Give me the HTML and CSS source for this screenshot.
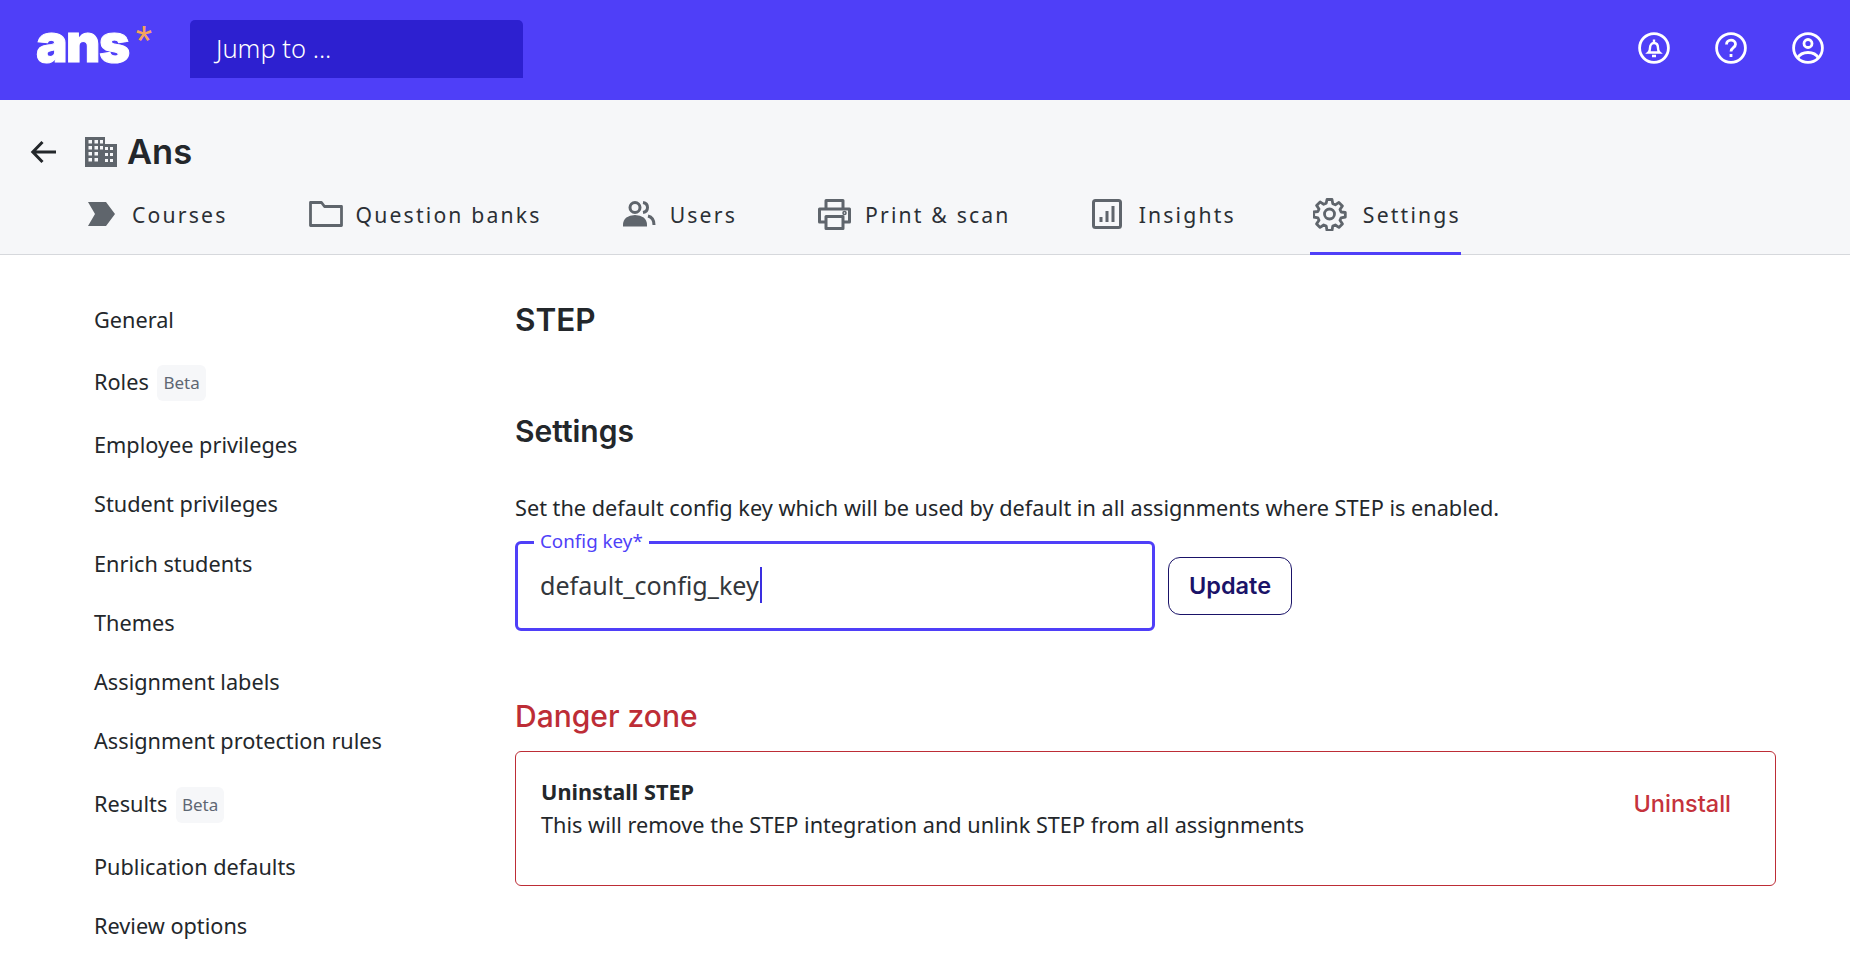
FILE: index.html
```html
<!DOCTYPE html>
<html lang="en">
<head>
<meta charset="utf-8">
<title>STEP settings</title>
<link rel="stylesheet" href="styles.css">
</head>
<body>
<header class="topbar">
  <div class="brand"><span class="brand-word">ans</span><span class="brand-star">*</span></div>
  <div class="jump">Jump to ...</div>
  <div class="top-icons">
    <svg class="top-icon" viewBox="0 0 32 32" fill="none" stroke="#fff" stroke-width="2.800"><circle cx="16" cy="16" r="14.400"/><path d="M10.500 20.500c1.200-1 1.500-2.300 1.500-4.500 0-3 1.600-5 4-5s4 2 4 5c0 2.200.3 3.500 1.500 4.500z" stroke-width="2.400"/><path d="M16 7.500v3M14 24h4" stroke-width="2.400"/></svg>
    <svg class="top-icon" viewBox="0 0 32 32" fill="none" stroke="#fff" stroke-width="2.800"><circle cx="16" cy="16" r="14.400"/><path d="M11.500 12.500c0-2.700 2-4.300 4.500-4.300s4.500 1.600 4.500 4c0 3.600-4.500 3.300-4.500 7.300"/><path d="M16 22v3"/></svg>
    <svg class="top-icon" viewBox="0 0 32 32" fill="none" stroke="#fff" stroke-width="2.800"><circle cx="16" cy="16" r="14.400"/><circle cx="16" cy="11.500" r="4"/><path d="M5.500 26c2-3.500 6-5.500 10.500-5.500s8.500 2 10.500 5.500"/></svg>
  </div>
</header>

<section class="subhead">
  <div class="title-row">
    <svg class="back" viewBox="0 0 26 26" fill="none" stroke="#23272b" stroke-width="3"><path d="M26 13H3M12.500 3 2.800 13l9.700 10"/></svg>
    <svg class="org" viewBox="0 0 32 30" fill="#5f656c"><path fill-rule="evenodd" d="M0 0h20v7h12v23H0zM3.500 3v3.500H7V3zm6 0v3.500H13V3zm5.500 0v3.500h3V3zM3.500 9v3.500H7V9zm6 0v3.500H13V9zm5.500 0v3.500h3V9zM3.500 15v3.500H7V15zm6 0v3.500H13V15zm10.500-5v3h3v-3zm5 0v3h3v-3zM3.500 21v3.500H7V21zm6 0v3.500H13V21zm10.500-5v3h3v-3zm5 0v3h3v-3zm-5 6v3h3v-3zm5 0v3h3v-3z"/></svg>
    <h1 class="org-name">Ans</h1>
  </div>
  <nav class="tabs">
    <a class="tab tab-courses">
      <svg class="tab-icon" viewBox="0 0 34 34" fill="#5f656c"><path d="M0 5h18l9 12-9 12H0l7-12z"/></svg>
      <span>Courses</span>
    </a>
    <a class="tab">
      <svg class="tab-icon" viewBox="0 0 34 34" fill="none" stroke="#5f656c" stroke-width="2.800" stroke-linejoin="round"><path d="M1.500 5.500h11l3 4h17v19H1.500z"/></svg>
      <span>Question banks</span>
    </a>
    <a class="tab">
      <svg class="tab-icon" viewBox="0 0 34 34" fill="none" stroke="#5f656c" stroke-width="3"><circle cx="12" cy="10.500" r="5"/><path d="M1.500 28c0-5.500 4-8.500 10.500-8.500s10.500 3 10.500 8.500z" fill="#5f656c"/><path d="M20 5.500c3 .5 4.500 2.500 4.500 5s-1.500 4.500-4.500 5M25 19c4 1 6 4.500 6 9"/></svg>
      <span>Users</span>
    </a>
    <a class="tab">
      <svg class="tab-icon" viewBox="0 0 34 34" fill="none" stroke="#5f656c" stroke-width="3" stroke-linejoin="round"><path d="M8 12V3.500h17V12M8 25H1.500V12h30v13H25"/><path d="M8 19.500h17v12H8z"/><circle cx="26.500" cy="16" r=".8"/></svg>
      <span>Print &amp; scan</span>
    </a>
    <a class="tab">
      <svg class="tab-icon" viewBox="0 0 34 34" fill="none" stroke="#5f656c" stroke-width="3"><rect x="1.500" y="3.500" width="27" height="27" rx="2"/><path d="M9 25v-5M15 25V14M21 25V9"/></svg>
      <span>Insights</span>
    </a>
    <a class="tab active">
      <svg class="tab-icon" viewBox="0 0 34 34" fill="none" stroke="#5f656c" stroke-width="2.800" stroke-linejoin="round"><circle cx="16.500" cy="17" r="5"/><path d="M14 2h5l.8 4.200 2.500 1.100 3.600-2.400 3.500 3.500-2.400 3.600 1.100 2.500 4.200.5v4.500l-4.200.8-1.100 2.500 2.400 3.600-3.500 3.500-3.600-2.400-2.500 1.100-.8 4.300h-5l-.8-4.300-2.500-1.100-3.600 2.400-3.500-3.500 2.400-3.600-1.100-2.500-4.200-.8V14.500l4.200-.5 1.100-2.500-2.400-3.600 3.500-3.500 3.600 2.400 2.500-1.100z" transform="translate(0 .5)"/></svg>
      <span>Settings</span>
    </a>
  </nav>
</section>

<div class="page">
  <aside class="side">
    <a class="side-item">General</a>
    <a class="side-item side-item-badge">Roles <span class="badge">Beta</span></a>
    <a class="side-item">Employee privileges</a>
    <a class="side-item">Student privileges</a>
    <a class="side-item">Enrich students</a>
    <a class="side-item">Themes</a>
    <a class="side-item">Assignment labels</a>
    <a class="side-item">Assignment protection rules</a>
    <a class="side-item side-item-badge">Results <span class="badge">Beta</span></a>
    <a class="side-item">Publication defaults</a>
    <a class="side-item">Review options</a>
  </aside>
  <main class="content">
    <h2 class="h-step">STEP</h2>
    <h3 class="h-settings">Settings</h3>
    <p class="lead">Set the default config key which will be used by default in all assignments where STEP is enabled.</p>
    <div class="form-row">
      <div class="field">
        <span class="field-label">Config key*</span>
        <span class="field-value">default_config_key</span><span class="caret"></span>
      </div>
      <button class="update">Update</button>
    </div>
    <h3 class="h-danger">Danger zone</h3>
    <div class="danger">
      <div class="danger-text">
        <strong>Uninstall STEP</strong>
        <span>This will remove the STEP integration and unlink STEP from all assignments</span>
      </div>
      <a class="uninstall">Uninstall</a>
    </div>
  </main>
</div>
</body>
</html>
```
FILE: styles.css
```css
* { box-sizing: border-box; }
html, body { margin: 0; height: 100%; overflow: hidden; }
body { font-family: "Noto Sans", "Open Sans", sans-serif; color: #23272b; background: #fff; }

.topbar { height: 100px; background: #4f3ff8; display: flex; align-items: flex-start; padding: 20px 0 0 36px; }
.brand { width: 154px; height: 50px; display: flex; color: #fff; }
.brand-word { font: 900 53px/46px "Inter", sans-serif; letter-spacing: -1.500px; -webkit-text-stroke: 1px #fff; }
.brand-star { font: 400 42px/42px "Liberation Sans", sans-serif; color: #f5a45d; margin: 0 0 0 7px; }
.jump { width: 333px; height: 58px; background: #2d20d0; color: #fff; font-size: 25.500px; line-height: 56px; padding-left: 26px; border-radius: 5px 5px 0 0; font-weight: 300; }
.top-icons { margin-left: auto; display: flex; gap: 45px; padding: 12px 26px 0 0; }
.top-icon { width: 32px; height: 32px; display: block; }

.subhead { height: 155px; background: #f6f7f9; border-bottom: 1px solid #d6d8dc; }
.title-row { display: flex; align-items: center; height: 96px; padding: 7px 0 0 30px; }
.back { width: 26px; height: 26px; }
.org { width: 32px; height: 30px; margin-left: 29px; }
.org-name { font: 600 34.500px/40px "Inter", sans-serif; color: #23272b; margin: 0 0 0 10px; }
.tabs { display: flex; padding-left: 85px; height: 59px; gap: 78px; }
.tab { display: flex; align-items: center; height: 59px; padding: 0 0 20px 3px; gap: 13px; font-size: 21.200px; letter-spacing: 2.170px; color: #2b2f35; border-bottom: 3px solid transparent; }
.tab-courses { gap: 10px; }
.tab.active { border-bottom-color: #4f3ff8; margin-left: -3.500px; gap: 15.500px; }
.tab-icon { width: 34px; height: 34px; flex: none; }

.page { display: flex; padding: 0 0 0 94px; }
.side { width: 421px; flex: none; padding-top: 34.500px; display: flex; flex-direction: column; }
.side-item { height: 59.300px; display: flex; align-items: center; font-size: 21.700px; color: #23272b; white-space: pre; }
.side-item-badge { height: 66px; }
.badge { margin-left: 3px; padding: 0 6px; height: 36px; line-height: 36px; background: #f6f7f9; border-radius: 6px; color: #5f6773; font-size: 17px; position: relative; top: 1px; }

.content { width: 1261px; }
.h-step { font: 600 31.500px/40px "Inter", sans-serif; margin: 0; padding-top: 45px; height: 150px; }
.h-settings { font: 600 30px/40px "Inter", sans-serif; margin: 0; padding-top: 6px; height: 88px; }
.lead { font-size: 21.700px; line-height: 30px; margin: 0; height: 48px; }
.form-row { display: flex; align-items: center; gap: 13px; }
.field { position: relative; width: 640px; height: 90px; border: 3px solid #4f3ff8; border-radius: 6px; padding: 0 0 2px 22px; display: flex; align-items: center; font-size: 25.100px; color: #33373c; }
.field-label { position: absolute; left: 16px; top: -15px; background: #fff; padding: 0 6px; font-size: 18.800px; line-height: 24px; color: #4f3ff8; }
.caret { width: 2px; height: 36px; background: #3a2ee0; margin-left: 1px; }
.update { width: 124px; height: 58px; background: #fff; border: 1px solid #1a1368; border-radius: 12px; font: 600 23.500px/1 "Inter", sans-serif; color: #1a1368; }
.h-danger { font: 500 30px/40px "Inter", sans-serif; color: #bd2d36; margin: 65px 0 15px; }
.danger { height: 135px; border: 1px solid #bd2d36; border-radius: 6px; padding: 23px 44px 0 25px; display: flex; justify-content: space-between; }
.danger-text { display: flex; flex-direction: column; font-size: 21.700px; line-height: 33px; }
.danger-text strong { font-weight: 700; }
.uninstall { font: 500 23.500px/36px "Inter", sans-serif; color: #c5323c; margin-top: 11px; }
```
